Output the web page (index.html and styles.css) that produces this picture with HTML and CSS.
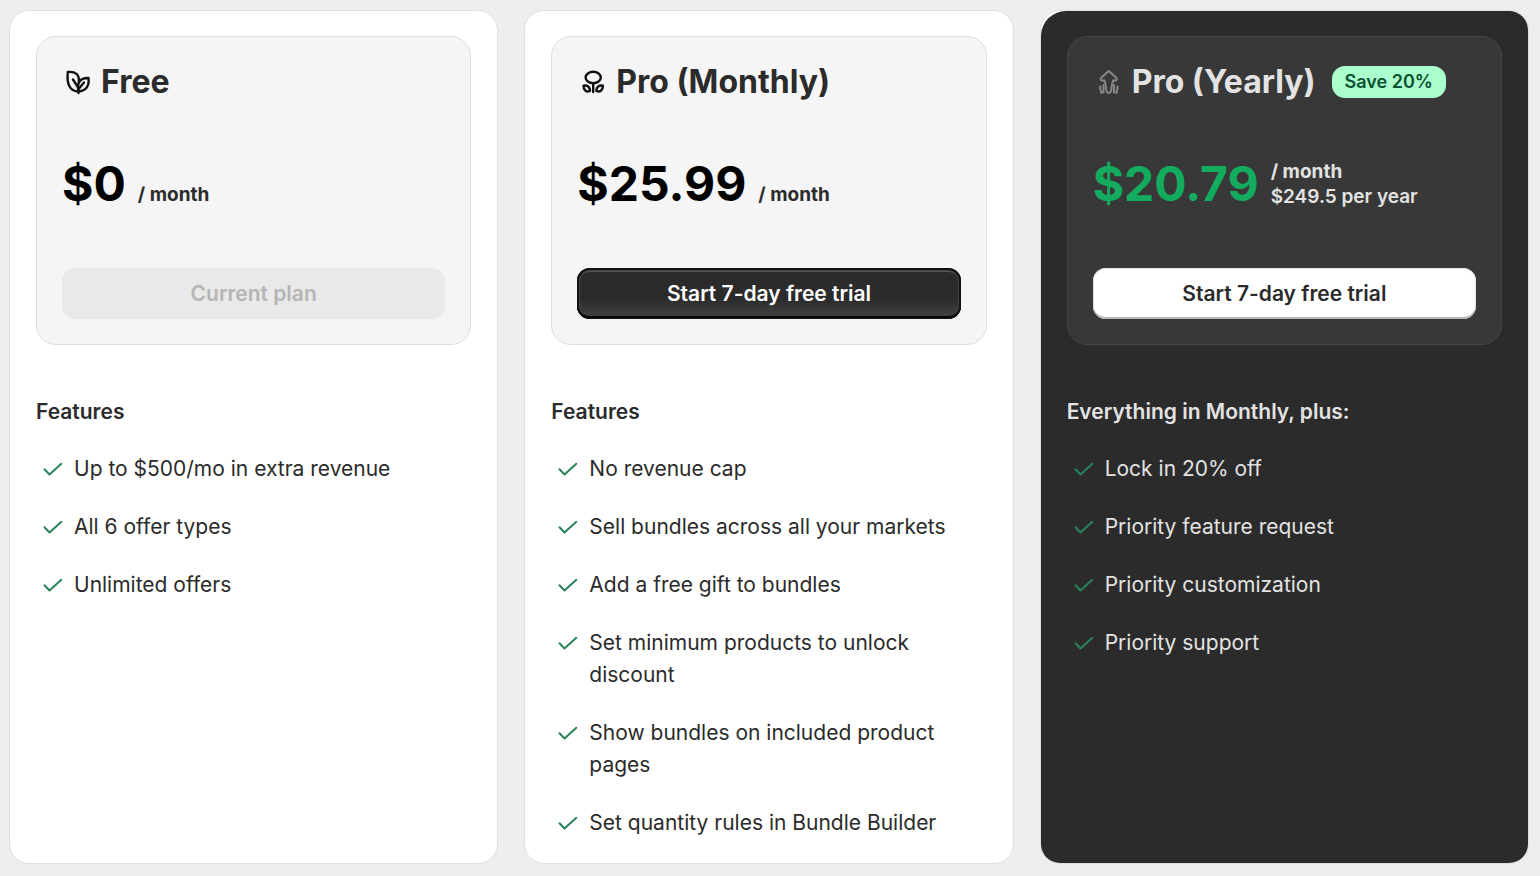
FILE: index.html
```html
<!DOCTYPE html>
<html lang="en">
<head>
  <meta charset="UTF-8">
  <meta name="viewport" content="width=device-width, initial-scale=1.0">
  <title>Plans</title>
  <link rel="stylesheet" href="styles.css">
</head>
<body>
  <svg class="sprite" aria-hidden="true">
    <symbol id="check" viewBox="0 0 20 16">
      <path d="M1.5 8.3l5 5.2L18.3 2.8" fill="none" stroke="currentColor" stroke-width="2" stroke-linecap="round" stroke-linejoin="round"/>
    </symbol>
  </svg>

  <main class="plans">
    <section class="plan">
      <div class="plan-body">
        <div class="plan-box">
          <div class="plan-title">
            <svg class="plan-icon" viewBox="0 0 32 32" fill="none" stroke="currentColor" stroke-width="2.4" stroke-linecap="round" stroke-linejoin="round">
              <path d="M16 25.500C8 25 4.500 18.500 5.800 6C13.500 5 17.500 9 16.800 15.500"/>
              <path d="M16.500 25.500C14.500 16.500 18.500 11.500 26.500 12C27.500 20 24 25 16.500 25.500"/>
              <path d="M11 13.500l5.500 8.500v5M22 16.500L17 22.500"/>
            </svg>
            <h2>Free</h2>
          </div>
          <div class="price-row">
            <span class="price">$0</span>
            <p class="period"><strong>/ month</strong></p>
          </div>
          <button class="btn" type="button" disabled>Current plan</button>
        </div>
        <h3>Features</h3>
        <ul class="features">
          <li><svg class="check"><use href="#check"/></svg>Up to $500/mo in extra revenue</li>
          <li><svg class="check"><use href="#check"/></svg>All 6 offer types</li>
          <li><svg class="check"><use href="#check"/></svg>Unlimited offers</li>
        </ul>
      </div>
    </section>

    <section class="plan">
      <div class="plan-body">
        <div class="plan-box">
          <div class="plan-title">
            <svg class="plan-icon" viewBox="0 0 32 32" fill="none" stroke="currentColor" stroke-width="2.4" stroke-linecap="round" stroke-linejoin="round">
              <ellipse cx="16.200" cy="11.500" rx="7.600" ry="5.700"/>
              <path d="M16.200 17.500v8.500"/>
              <path d="M13 25C9 26.500 6.500 24 6.500 19.700C10.500 18.700 13 21 13 25z"/>
              <path d="M19.400 25C23.400 26.500 25.900 24 25.900 19.700C21.900 18.700 19.400 21 19.400 25z"/>
            </svg>
            <h2>Pro (Monthly)</h2>
          </div>
          <div class="price-row">
            <span class="price">$25.99</span>
            <p class="period"><strong>/ month</strong></p>
          </div>
          <button class="btn btn-primary" type="button">Start 7-day free trial</button>
        </div>
        <h3>Features</h3>
        <ul class="features">
          <li><svg class="check"><use href="#check"/></svg>No revenue cap</li>
          <li><svg class="check"><use href="#check"/></svg>Sell bundles across all your markets</li>
          <li><svg class="check"><use href="#check"/></svg>Add a free gift to bundles</li>
          <li><svg class="check"><use href="#check"/></svg>Set minimum products to unlock discount</li>
          <li><svg class="check"><use href="#check"/></svg>Show bundles on included product pages</li>
          <li><svg class="check"><use href="#check"/></svg>Set quantity rules in Bundle Builder</li>
        </ul>
      </div>
    </section>

    <section class="plan">
      <div class="plan-body plan-dark">
        <div class="plan-box">
          <div class="plan-title">
            <svg class="plan-icon" viewBox="0 0 32 32" fill="none" stroke="currentColor" stroke-width="2" stroke-linecap="round" stroke-linejoin="round">
              <path d="M11.500 14.500H9Q6.500 13.500 8.500 11.500L14.500 6Q15.800 4.800 17 6L23 11.500Q25 13.500 22.500 14.500H20"/>
              <path d="M11 14.500C13.500 18 12.500 22 13.500 25Q15.800 29 18 25C19 22 18 18 20.500 14.500"/>
              <path d="M10.500 19v7.500M21 19v7.500M7.200 20.500v2l1.200 4.500M24.500 20.500v2l-1.200 4.500"/>
            </svg>
            <h2>Pro (Yearly)</h2>
            <span class="badge">Save 20%</span>
          </div>
          <div class="price-row">
            <span class="price">$20.79</span>
            <p class="period"><strong>/ month</strong><br>$249.5 per year</p>
          </div>
          <button class="btn btn-light" type="button">Start 7-day free trial</button>
        </div>
        <h3>Everything in Monthly, plus:</h3>
        <ul class="features">
          <li><svg class="check"><use href="#check"/></svg>Lock in 20% off</li>
          <li><svg class="check"><use href="#check"/></svg>Priority feature request</li>
          <li><svg class="check"><use href="#check"/></svg>Priority customization</li>
          <li><svg class="check"><use href="#check"/></svg>Priority support</li>
        </ul>
      </div>
    </section>
  </main>
</body>
</html>
```
FILE: styles.css
```css
* {
  margin: 0;
  padding: 0;
  box-sizing: border-box;
}

body {
  font-family: Inter, "Liberation Sans", sans-serif;
  font-size: 21px;
  line-height: 32px;
  color: #2b2b2b;
  background-color: #eee;
}

.sprite {
  display: none;
}

.plans {
  display: grid;
  grid-template-columns: repeat(3, 1fr);
  gap: 26px;
  min-height: 100vh;
  padding: 10px 11px 12px 9px;
}

.plan {
  background-color: #fff;
  border: 1px solid #e0e0e0;
  border-radius: 20px;
}

.plan-body {
  height: 100%;
  padding: 25px 26px 24px;
}

.plan-box {
  padding: 25px;
  background-color: #f5f5f5;
  border: 1px solid #dedede;
  border-radius: 20px;
}

.plan-title {
  display: flex;
  align-items: center;
  height: 40px;
}

.plan-icon {
  width: 32px;
  height: 32px;
  margin-right: 7px;
  color: #111;
}

h2 {
  font-size: 32px;
  line-height: 40px;
  font-weight: 700;
}

.badge {
  margin-left: 16px;
  padding: 0 13px;
  font-size: 18px;
  line-height: 32px;
  font-weight: 600;
  color: #0c5132;
  background-color: #afc;
  border-radius: 13px;
}

/* price and billing period */
.price-row {
  display: flex;
  align-items: baseline;
  gap: 12px;
  margin: 50px 0 52px;
  height: 64px;
}

.price {
  font-size: 48px;
  line-height: 64px;
  font-weight: 700;
  color: #000;
}

.period {
  font-size: 19px;
  line-height: 25px;
  font-weight: 600;
}

.period strong {
  font-weight: 650;
}

.btn {
  display: block;
  width: 100%;
  height: 51px;
  font: 600 21px/32px Inter, "Liberation Sans", sans-serif;
  color: #2b2b2b;
  border: none;
  border-radius: 13px;
}

.btn:disabled {
  color: #b5b5b5;
  background-color: #e9e9e9;
}

.btn-primary {
  color: #fff;
  background: linear-gradient(#2b2b2b 60%, #444);
  box-shadow: inset 0 0 0 2px #111, inset 0 -3px 0 #000, inset 0 0 0 3px #444, inset 0 4px 0 #555;
}

.btn-light {
  background-color: #fff;
  box-shadow: inset 0 -2px 0 #b5b5b5, inset 0 0 0 1px #e3e3e3;
}

h3 {
  margin-top: 51px;
  font-size: 21px;
  line-height: 32px;
  font-weight: 600;
}

.features {
  display: grid;
  gap: 26px;
  margin-top: 25px;
  list-style: none;
}

.features li {
  display: flex;
  align-items: flex-start;
  gap: 11px;
  padding-left: 7px;
}

.check {
  flex: none;
  width: 20px;
  height: 16px;
  margin-top: 8px;
  color: #29845a;
}

/* yearly plan */
.plan-dark {
  color: #e3e3e3;
  background-color: #2b2b2b;
  border-radius: 25px 19px 19px 19px;
}

.plan-dark .plan-box {
  background-color: #383838;
  border-color: #444;
}

.plan-dark .plan-icon {
  color: #888;
}

.plan-dark .price-row {
  align-items: center;
}

.plan-dark .price {
  color: #13ac5f;
}
```
